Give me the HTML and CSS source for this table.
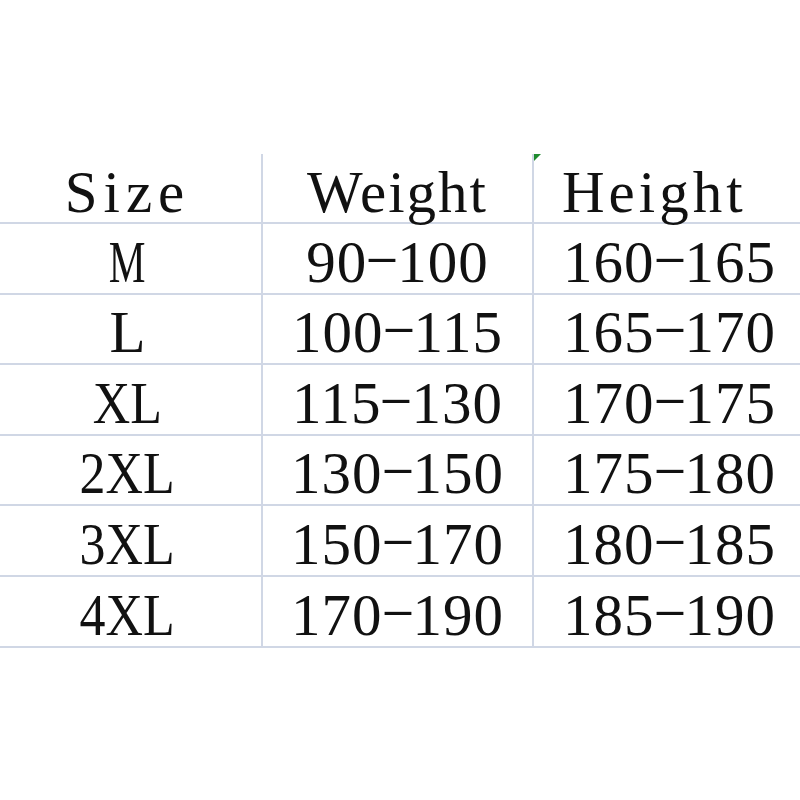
FILE: index.html
```html
<!DOCTYPE html>
<html lang="en">
<head>
<meta charset="utf-8">
<title>Size chart</title>
<link rel="stylesheet" href="styles.css">
</head>
<body>
<div class="sheet">
  <div class="grid">
    <div class="cell c1 head size-h">Size</div>
    <div class="cell c2 head weight-h">Weight</div>
    <div class="cell c3 head height-h"><span class="flag"></span>Height</div>

    <div class="cell c1 sz"><span class="narrow-m">M</span></div>
    <div class="cell c2 num">90<span class="dash">-</span>100</div>
    <div class="cell c3 num">160<span class="dash">-</span>165</div>

    <div class="cell c1 sz">L</div>
    <div class="cell c2 num">100<span class="dash">-</span>115</div>
    <div class="cell c3 num">165<span class="dash">-</span>170</div>

    <div class="cell c1 sz"><span class="narrow">XL</span></div>
    <div class="cell c2 num">115<span class="dash">-</span>130</div>
    <div class="cell c3 num">170<span class="dash">-</span>175</div>

    <div class="cell c1 sz"><span class="narrow">2XL</span></div>
    <div class="cell c2 num">130<span class="dash">-</span>150</div>
    <div class="cell c3 num">175<span class="dash">-</span>180</div>

    <div class="cell c1 sz"><span class="narrow">3XL</span></div>
    <div class="cell c2 num">150<span class="dash">-</span>170</div>
    <div class="cell c3 num">180<span class="dash">-</span>185</div>

    <div class="cell c1 sz"><span class="narrow">4XL</span></div>
    <div class="cell c2 num">170<span class="dash">-</span>190</div>
    <div class="cell c3 num">185<span class="dash">-</span>190</div>
  </div>
</div>
</body>
</html>
```

FILE: styles.css
```css
* { box-sizing: border-box; }

html, body {
  margin: 0;
  background: #ffffff;
}

.sheet {
  padding-top: 154px;
  width: 800px;
  overflow: hidden;
}

.grid {
  display: grid;
  grid-template-columns: 263px 271px 1fr;
  grid-template-rows: 70px repeat(6, 70.6px);
}

.cell {
  border-bottom: 2px solid #d0d7e5;
  font-family: "Liberation Serif", "Times New Roman", serif;
  font-size: 59px;
  line-height: 59px;
  color: #111;
  display: flex;
  align-items: flex-end;
  justify-content: center;
  padding-bottom: 1px;
  white-space: nowrap;
}

.head { padding-bottom: 0; }

.c1, .c2 { border-right: 2px solid #d0d7e5; }

.c1 { padding-right: 6px; }

.c3 {
  justify-content: flex-start;
  padding-left: 29px;
  position: relative;
}

.size-h { letter-spacing: 6px; }
.weight-h { letter-spacing: 2px; }
.height-h { letter-spacing: 4px; padding-left: 28px; }

.num { letter-spacing: 1px; }

.narrow {
  display: inline-block;
  transform: scaleX(0.88);
}

.narrow-m {
  display: inline-block;
  transform: scaleX(0.7);
}

.dash {
  display: inline-block;
  width: 30px;
  text-align: center;
  transform: translateY(-6px) scale(1.75, 0.7);
  letter-spacing: 0;
}

.flag {
  position: absolute;
  left: 0;
  top: 0;
  width: 0;
  height: 0;
  border-top: 7px solid #1e8a2e;
  border-right: 7px solid transparent;
}
```
